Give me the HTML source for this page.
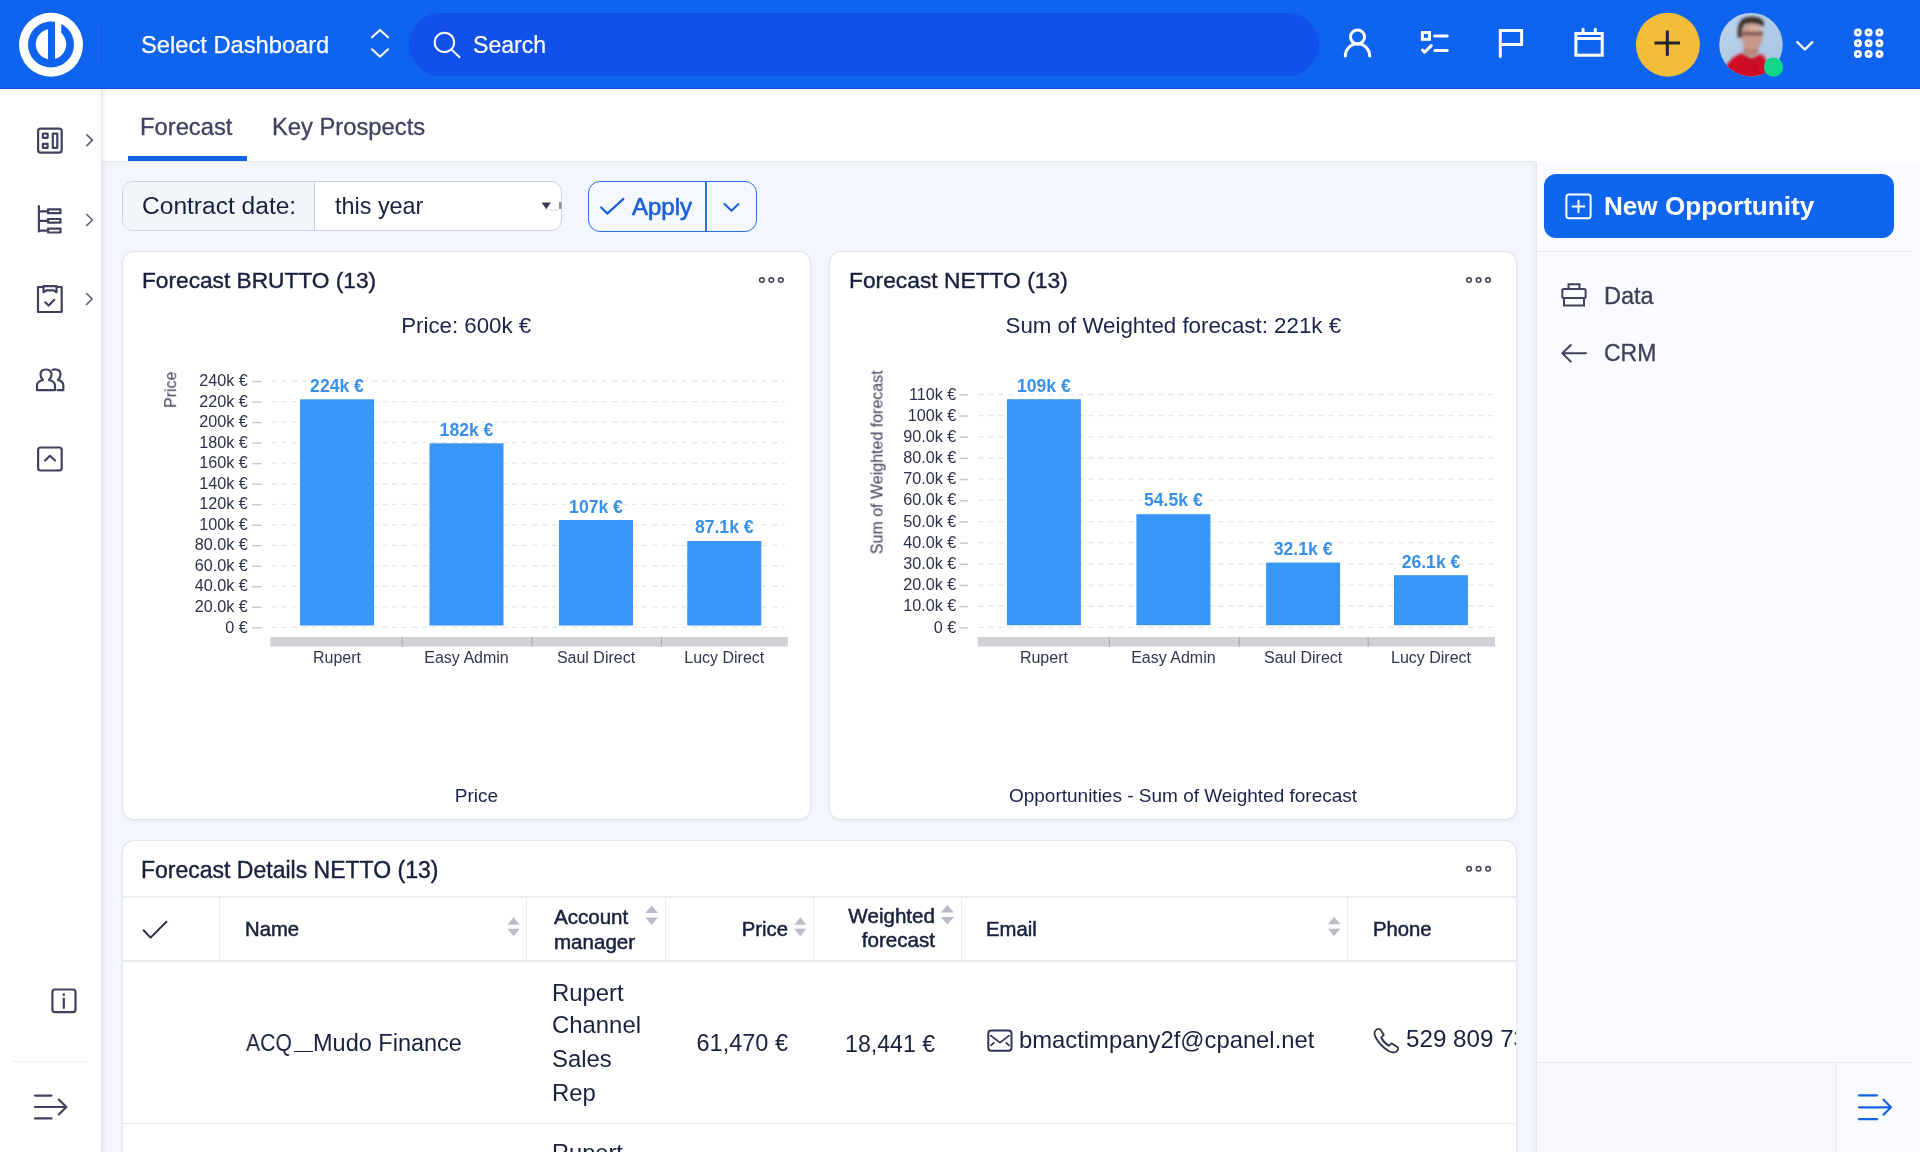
<!DOCTYPE html><html><head><meta charset="utf-8"><style>
html,body{margin:0;padding:0} body{width:1920px;height:1152px;overflow:hidden;position:relative;background:#f3f6fc;font-family:"Liberation Sans", sans-serif}
.t{position:absolute;line-height:1;white-space:nowrap;will-change:transform}
.m{-webkit-text-stroke:0.3px currentColor}
.sb{-webkit-text-stroke:0.55px currentColor}
svg text{will-change:transform}
svg{overflow:visible}
</style></head><body>
<div style="position:absolute;left:1536px;top:161px;width:384px;height:991px;background:#fafbfe;border-left:1px solid #e4e7ec;box-shadow:-2px 0 4px rgba(30,40,80,0.05)"></div>
<div style="position:absolute;left:102px;top:89px;width:1818px;height:72.5px;background:#fff"></div>
<div style="position:absolute;left:102px;top:161px;width:1434px;height:1px;background:#e7eaef;box-shadow:0 1px 4px rgba(40,60,100,0.07)"></div>
<div style="position:absolute;left:0px;top:89px;width:101px;height:1063px;background:#fff;border-right:1px solid #e2e5ea;box-shadow:2px 0 5px rgba(30,40,80,0.07)"></div>
<div style="position:absolute;left:0px;top:0px;width:1920px;height:89px;background:#0e64ef"></div>
<div style="position:absolute;left:0px;top:88px;width:1920px;height:1px;background:#0b55d6"></div>
<div style="position:absolute;left:101px;top:12px;width:1.2px;height:66px;background:linear-gradient(#0e64ef,#0b5ae4 20%,#0b5ae4 80%,#0e64ef)"></div>
<svg style="position:absolute;left:0px;top:0px;" width="102" height="89" viewBox="0 0 102 89"><circle cx="51" cy="44.8" r="32" fill="#fff"/>
<circle cx="51" cy="44.6" r="23" fill="#0e64ef"/>
<circle cx="51" cy="44.3" r="15.2" fill="#fff"/>
<rect x="48" y="21.8" width="7" height="38.7" fill="#0e64ef"/>
<rect x="55" y="20" width="6.3" height="14" fill="#fff"/></svg>
<div class="t" style="left:141.00px;top:33.86px;font-size:23.7px;color:#fff;font-weight:400;-webkit-text-stroke:0.25px #fff">Select Dashboard</div>
<svg style="position:absolute;left:360px;top:20px;" width="40" height="50" viewBox="360 20 40 50"><path d="M372 37.3 L380 29.9 L388 37.3 M372 49.3 L380 56.8 L388 49.3" fill="none" stroke="#fff" stroke-width="2" stroke-linecap="round" stroke-linejoin="round"/></svg>
<div style="position:absolute;left:408.5px;top:13px;width:910.5px;height:63px;background:#1150e9;border-radius:32px"></div>
<svg style="position:absolute;left:420px;top:20px;" width="60" height="50" viewBox="420 20 60 50"><circle cx="444.4" cy="42.4" r="9.7" fill="none" stroke="#fff" stroke-width="2"/><path d="M451.6 49.6 L459.6 57.2" stroke="#fff" stroke-width="2" stroke-linecap="round"/></svg>
<div class="t" style="left:473.00px;top:34.36px;font-size:23.1px;color:#fff;font-weight:400;-webkit-text-stroke:0.2px #fff">Search</div>
<svg style="position:absolute;left:1330px;top:20px;" width="60" height="50" viewBox="1330 20 60 50"><circle cx="1357.5" cy="36.9" r="7" fill="none" stroke="#fff" stroke-width="3"/><path d="M1345.3 56 A12.2 12.2 0 0 1 1369.7 56" fill="none" stroke="#fff" stroke-width="3" stroke-linecap="round"/></svg>
<svg style="position:absolute;left:1410px;top:20px;" width="50" height="50" viewBox="1410 20 50 50"><rect x="1422.4" y="32.5" width="7.1" height="6.8" fill="none" stroke="#fff" stroke-width="3"/><path d="M1434.7 36 H1447.3 M1434.7 50.4 H1447.3" stroke="#fff" stroke-width="3" stroke-linecap="round"/><path d="M1422.5 50 L1424.6 52.2 L1431.3 45.6" fill="none" stroke="#fff" stroke-width="3" stroke-linecap="round" stroke-linejoin="round"/></svg>
<svg style="position:absolute;left:1490px;top:20px;" width="50" height="50" viewBox="1490 20 50 50"><path d="M1500.3 56.5 V30.4 H1521.6 V44.5 H1500.3" fill="none" stroke="#fff" stroke-width="3" stroke-linecap="round" stroke-linejoin="miter"/></svg>
<svg style="position:absolute;left:1565px;top:20px;" width="50" height="50" viewBox="1565 20 50 50"><rect x="1575.9" y="33.5" width="26.3" height="21.7" fill="none" stroke="#fff" stroke-width="3"/><path d="M1576 38.5 H1602" stroke="#fff" stroke-width="3"/><path d="M1583.1 29.3 V33 M1595.3 29.3 V33" stroke="#fff" stroke-width="3" stroke-linecap="round"/></svg>
<svg style="position:absolute;left:1630px;top:8px;" width="80" height="80" viewBox="1630 8 80 80"><circle cx="1667.9" cy="44.7" r="32" fill="#f3bd3a"/><path d="M1654.5 43 H1680 M1667.3 30.5 V55.8" stroke="#1e2432" stroke-width="3"/></svg>
<svg style="position:absolute;left:1715px;top:8px;" width="80" height="80" viewBox="1715 8 80 80"><defs><clipPath id="avc"><circle cx="1751" cy="44.7" r="31.8"/></clipPath><filter id="avb" x="-30%" y="-30%" width="160%" height="160%"><feGaussianBlur stdDeviation="1.4"/></filter>
<linearGradient id="avg" x1="0" y1="0" x2="1" y2="1"><stop offset="0" stop-color="#bcd4ee"/><stop offset="1" stop-color="#a6c3e2"/></linearGradient></defs>
<circle cx="1751" cy="44.7" r="31.8" fill="url(#avg)"/>
<g clip-path="url(#avc)"><g filter="url(#avb)">
<ellipse cx="1751" cy="50" rx="8" ry="6" fill="#b5857a"/>
<ellipse cx="1752" cy="36.5" rx="10.8" ry="13.5" fill="#c8988b"/>
<ellipse cx="1755" cy="28" rx="6" ry="5" fill="#ddb2a4" opacity="0.8"/>
<path d="M1738 38 Q1736 22 1744 18 Q1752 15 1760 18 Q1765 21 1764 27 Q1756 22 1745 24 Q1741 28 1741.5 38 Z" fill="#3c302c"/>
<rect x="1741" y="31.8" width="22" height="3.6" rx="1" fill="#6a4c44" opacity="0.85"/>
<path d="M1722 84 L1726 66 Q1732 56 1742 53 L1751 58 L1761 54 Q1766 57 1767 64 L1769 84 Z" fill="#cf1028"/>
<path d="M1743 55 L1753 62 L1756 72" fill="none" stroke="#9a0a1a" stroke-width="1.5" opacity="0.7"/>
</g></g>
<circle cx="1773.5" cy="67.1" r="9.6" fill="#12d98a"/></svg>
<svg style="position:absolute;left:1790px;top:35px;" width="30" height="20" viewBox="1790 35 30 20"><path d="M1797.3 42.2 L1804.8 49.5 L1812.3 42.2" fill="none" stroke="#fff" stroke-width="2.4" stroke-linecap="round" stroke-linejoin="round"/></svg>
<svg style="position:absolute;left:1845px;top:20px;" width="50" height="50" viewBox="1845 20 50 50"><circle cx="1857.9" cy="32.4" r="2.55" fill="none" stroke="#fff" stroke-width="2.9"/><circle cx="1857.9" cy="43.2" r="2.55" fill="none" stroke="#fff" stroke-width="2.9"/><circle cx="1857.9" cy="53.9" r="2.55" fill="none" stroke="#fff" stroke-width="2.9"/><circle cx="1868.6" cy="32.4" r="2.55" fill="none" stroke="#fff" stroke-width="2.9"/><circle cx="1868.6" cy="43.2" r="2.55" fill="none" stroke="#fff" stroke-width="2.9"/><circle cx="1868.6" cy="53.9" r="2.55" fill="none" stroke="#fff" stroke-width="2.9"/><circle cx="1879.4" cy="32.4" r="2.55" fill="none" stroke="#fff" stroke-width="2.9"/><circle cx="1879.4" cy="43.2" r="2.55" fill="none" stroke="#fff" stroke-width="2.9"/><circle cx="1879.4" cy="53.9" r="2.55" fill="none" stroke="#fff" stroke-width="2.9"/></svg>
<svg style="position:absolute;left:30px;top:120px;" width="70" height="300" viewBox="30 120 70 300">
<rect x="38.1" y="128.7" width="23.6" height="23.9" rx="2.5" fill="none" stroke="#3f425e" stroke-width="2.2" stroke-linecap="round" stroke-linejoin="round"/>
<rect x="42.9" y="133.7" width="4.7" height="4.1" fill="none" stroke="#3f425e" stroke-width="2.2" stroke-linecap="round" stroke-linejoin="round"/>
<rect x="42.9" y="143.9" width="4.7" height="3.9" fill="none" stroke="#3f425e" stroke-width="2.2" stroke-linecap="round" stroke-linejoin="round"/>
<rect x="52.8" y="133.7" width="4.5" height="14.1" fill="none" stroke="#3f425e" stroke-width="2.2" stroke-linecap="round" stroke-linejoin="round"/>
<path d="M86.8 134.8 L92.5 140.2 L86.8 145.6" fill="none" stroke="#5a5d70" stroke-width="1.6" stroke-linecap="round" stroke-linejoin="round"/>
<path d="M38.9 206 V231.6 M38.9 211.3 H47 M38.9 220.8 H47 M38.9 230.6 H47" fill="none" stroke="#3f425e" stroke-width="2.2" stroke-linecap="round" stroke-linejoin="round"/>
<rect x="48" y="209.4" width="12.5" height="3.8" fill="none" stroke="#3f425e" stroke-width="2.2" stroke-linecap="round" stroke-linejoin="round"/>
<rect x="48" y="219" width="12.5" height="3.6" fill="none" stroke="#3f425e" stroke-width="2.2" stroke-linecap="round" stroke-linejoin="round"/>
<rect x="48" y="228.7" width="12.5" height="3.8" fill="none" stroke="#3f425e" stroke-width="2.2" stroke-linecap="round" stroke-linejoin="round"/>
<path d="M86.8 214.5 L92.5 220 L86.8 225.4" fill="none" stroke="#5a5d70" stroke-width="1.6" stroke-linecap="round" stroke-linejoin="round"/>
<path d="M43.5 287 H38 V312 H61.7 V287 H56.5" fill="none" stroke="#3f425e" stroke-width="2.2" stroke-linecap="round" stroke-linejoin="round"/>
<path d="M43.5 286.1 V292.2 L46.5 290.4 H53.5 L56.5 292.2 V286.1 Z" fill="none" stroke="#3f425e" stroke-width="2.2" stroke-linecap="round" stroke-linejoin="round"/>
<path d="M45.2 302.3 L48.7 305.5 L54.3 299.8" fill="none" stroke="#3f425e" stroke-width="2.2" stroke-linecap="round" stroke-linejoin="round"/>
<path d="M86.6 293.5 L92.2 299 L86.6 304.5" fill="none" stroke="#5a5d70" stroke-width="1.6" stroke-linecap="round" stroke-linejoin="round"/>
</svg>
<svg style="position:absolute;left:30px;top:360px;" width="70" height="120" viewBox="30 360 70 120">
<path d="M37 390.2 V385.5 Q37 381.5 43 380 Q40.5 377.5 40.5 374.5 Q40.5 369.5 46 369.5 Q51.5 369.5 51.5 374.5 Q51.5 377.5 49 380 Q55 381.5 55 385.5 V390.2 Z" fill="none" stroke="#3f425e" stroke-width="2.2" stroke-linecap="round" stroke-linejoin="round"/>
<path d="M52.5 369.8 Q53.8 369.4 55 369.4 Q60.5 369.4 60.5 374.4 Q60.5 377.4 58 379.9 Q63.3 381.4 63.3 385.4 V390.2 H57.5" fill="none" stroke="#3f425e" stroke-width="2.2" stroke-linecap="round" stroke-linejoin="round"/>
<rect x="38.1" y="447.5" width="23.6" height="23" rx="2.5" fill="none" stroke="#3f425e" stroke-width="2.2" stroke-linecap="round" stroke-linejoin="round"/>
<path d="M45 460.5 L50 455.8 L55 460.5" fill="none" stroke="#3f425e" stroke-width="2.2" stroke-linecap="round" stroke-linejoin="round"/>
</svg>
<svg style="position:absolute;left:40px;top:980px;" width="40" height="40" viewBox="40 980 40 40"><rect x="52.4" y="989.5" width="23.1" height="22.6" rx="2.5" fill="none" stroke="#3f425e" stroke-width="2.2" stroke-linecap="round" stroke-linejoin="round"/><circle cx="63.8" cy="994.6" r="1.3" fill="#3f425e"/><path d="M63.8 998.5 V1008" fill="none" stroke="#3f425e" stroke-width="2.2" stroke-linecap="round" stroke-linejoin="round"/></svg>
<div style="position:absolute;left:12px;top:1061px;width:76px;height:1px;background:#eceef2"></div>
<svg style="position:absolute;left:20px;top:1080px;" width="60" height="50" viewBox="20 1080 60 50"><path d="M35 1095.6 H51.5 M35 1118.4 H51.5 M35 1107 H66.2 M58.8 1099.5 L66.4 1107 L58.8 1114.5" fill="none" stroke="#3f425e" stroke-width="2.2" stroke-linecap="round" stroke-linejoin="round"/></svg>
<div class="t" style="left:140.30px;top:115.21px;font-size:23.75px;color:#3f4260;font-weight:400;-webkit-text-stroke:0.3px #3f4260">Forecast</div>
<div class="t" style="left:271.80px;top:115.21px;font-size:23.75px;color:#3f4260;font-weight:400;-webkit-text-stroke:0.3px #3f4260">Key Prospects</div>
<div style="position:absolute;left:128px;top:156px;width:119px;height:5px;background:#1463e6"></div>
<div style="position:absolute;left:122px;top:180.5px;width:439.5px;height:50.5px;box-sizing:border-box;border:1px solid #c9d3e4;border-radius:11px;background:#fff;overflow:hidden"></div>
<div style="position:absolute;left:123px;top:181.5px;width:191px;height:48.5px;background:#f2f6fb;border-radius:10px 0 0 10px;border-right:1px solid #c9d3e4"></div>
<div class="t" style="left:141.80px;top:193.53px;font-size:24.55px;color:#18213d;font-weight:400;">Contract date:</div>
<div class="t" style="left:335.00px;top:194.51px;font-size:23.4px;color:#18213d;font-weight:400;">this year</div>
<svg style="position:absolute;left:535px;top:195px;" width="30" height="20" viewBox="535 195 30 20"><path d="M541.6 202.4 H551 L546.3 209.2 Z" fill="#3a3a55"/><rect x="559" y="202" width="2.5" height="7" fill="#8a8d99"/><rect x="549" y="209.5" width="10" height="1" fill="#d8dae0"/></svg>
<div style="position:absolute;left:587.5px;top:180.5px;width:169px;height:51px;box-sizing:border-box;border:1.6px solid #2f6fe2;border-radius:12px;background:#f5f8fe"></div>
<div style="position:absolute;left:704.8px;top:181px;width:1.8px;height:50px;background:#2f6fe2"></div>
<svg style="position:absolute;left:595px;top:190px;" width="35" height="30" viewBox="595 190 35 30"><path d="M601.2 207.5 L607.2 213.6 L623.4 198.9" fill="none" stroke="#1a5fd8" stroke-width="2.2" stroke-linecap="round" stroke-linejoin="round"/></svg>
<div class="t" style="left:631.50px;top:194.60px;font-size:24px;color:#1a5fd8;font-weight:400;-webkit-text-stroke:0.6px #1a5fd8">Apply</div>
<svg style="position:absolute;left:715px;top:195px;" width="30" height="25" viewBox="715 195 30 25"><path d="M724.5 204 L731.5 210.8 L738.5 204" fill="none" stroke="#1a5fd8" stroke-width="2" stroke-linecap="round" stroke-linejoin="round"/></svg>
<div style="position:absolute;left:122px;top:251px;width:689px;height:569px;box-sizing:border-box;background:#fff;border:1px solid #dfe3ea;border-radius:12px;box-shadow:0 1px 3px rgba(30,50,90,0.07)"></div>
<div style="position:absolute;left:829px;top:251px;width:688px;height:569px;box-sizing:border-box;background:#fff;border:1px solid #dfe3ea;border-radius:12px;box-shadow:0 1px 3px rgba(30,50,90,0.07)"></div>
<div style="position:absolute;left:122px;top:840px;width:1395px;height:400px;box-sizing:border-box;background:#fff;border:1px solid #dfe3ea;border-radius:12px;box-shadow:0 1px 3px rgba(30,50,90,0.07)"></div>
<div class="t" style="left:141.80px;top:268.90px;font-size:22.7px;color:#18213d;font-weight:400;-webkit-text-stroke:0.4px #18213d">Forecast BRUTTO (13)</div>
<div class="t" style="left:849.20px;top:269.32px;font-size:22.8px;color:#18213d;font-weight:400;-webkit-text-stroke:0.4px #18213d">Forecast NETTO (13)</div>
<div class="t" style="left:141.30px;top:858.75px;font-size:23.0px;color:#18213d;font-weight:400;-webkit-text-stroke:0.4px #18213d">Forecast Details NETTO (13)</div>
<svg style="position:absolute;left:750px;top:270px;" width="50" height="20" viewBox="750 270 50 20"><circle cx="761.85" cy="280" r="2.3" fill="none" stroke="#3d3f50" stroke-width="1.5"/><circle cx="771.35" cy="280" r="2.3" fill="none" stroke="#3d3f50" stroke-width="1.5"/><circle cx="780.85" cy="280" r="2.3" fill="none" stroke="#3d3f50" stroke-width="1.5"/></svg>
<svg style="position:absolute;left:1455px;top:270px;" width="50" height="20" viewBox="1455 270 50 20"><circle cx="1469.06" cy="280" r="2.3" fill="none" stroke="#3d3f50" stroke-width="1.5"/><circle cx="1478.56" cy="280" r="2.3" fill="none" stroke="#3d3f50" stroke-width="1.5"/><circle cx="1488.06" cy="280" r="2.3" fill="none" stroke="#3d3f50" stroke-width="1.5"/></svg>
<svg style="position:absolute;left:1455px;top:859px;" width="50" height="20" viewBox="1455 859 50 20"><circle cx="1469.06" cy="868.7" r="2.3" fill="none" stroke="#3d3f50" stroke-width="1.5"/><circle cx="1478.56" cy="868.7" r="2.3" fill="none" stroke="#3d3f50" stroke-width="1.5"/><circle cx="1488.06" cy="868.7" r="2.3" fill="none" stroke="#3d3f50" stroke-width="1.5"/></svg>
<svg style="position:absolute;left:122px;top:251px;" width="689" height="569" viewBox="122 251 689 569"><g font-family='"Liberation Sans", sans-serif'><text x="247.8" y="386.25" text-anchor="end" font-size="16.2" fill="#2b324b">240k €</text><rect x="252.2" y="380.85" width="9.400000000000034" height="1.4" fill="#c6c7cc"/><line x1="272" y1="381.15" x2="785" y2="381.15" stroke="#e8e8eb" stroke-width="1.3" stroke-dasharray="5,5"/><text x="247.8" y="406.77" text-anchor="end" font-size="16.2" fill="#2b324b">220k €</text><rect x="252.2" y="401.37" width="9.400000000000034" height="1.4" fill="#c6c7cc"/><line x1="272" y1="401.67" x2="785" y2="401.67" stroke="#e8e8eb" stroke-width="1.3" stroke-dasharray="5,5"/><text x="247.8" y="427.29" text-anchor="end" font-size="16.2" fill="#2b324b">200k €</text><rect x="252.2" y="421.89" width="9.400000000000034" height="1.4" fill="#c6c7cc"/><line x1="272" y1="422.19" x2="785" y2="422.19" stroke="#e8e8eb" stroke-width="1.3" stroke-dasharray="5,5"/><text x="247.8" y="447.81" text-anchor="end" font-size="16.2" fill="#2b324b">180k €</text><rect x="252.2" y="442.41" width="9.400000000000034" height="1.4" fill="#c6c7cc"/><line x1="272" y1="442.71" x2="785" y2="442.71" stroke="#e8e8eb" stroke-width="1.3" stroke-dasharray="5,5"/><text x="247.8" y="468.33" text-anchor="end" font-size="16.2" fill="#2b324b">160k €</text><rect x="252.2" y="462.93" width="9.400000000000034" height="1.4" fill="#c6c7cc"/><line x1="272" y1="463.23" x2="785" y2="463.23" stroke="#e8e8eb" stroke-width="1.3" stroke-dasharray="5,5"/><text x="247.8" y="488.85" text-anchor="end" font-size="16.2" fill="#2b324b">140k €</text><rect x="252.2" y="483.45" width="9.400000000000034" height="1.4" fill="#c6c7cc"/><line x1="272" y1="483.75" x2="785" y2="483.75" stroke="#e8e8eb" stroke-width="1.3" stroke-dasharray="5,5"/><text x="247.8" y="509.38" text-anchor="end" font-size="16.2" fill="#2b324b">120k €</text><rect x="252.2" y="503.98" width="9.400000000000034" height="1.4" fill="#c6c7cc"/><line x1="272" y1="504.28" x2="785" y2="504.28" stroke="#e8e8eb" stroke-width="1.3" stroke-dasharray="5,5"/><text x="247.8" y="529.90" text-anchor="end" font-size="16.2" fill="#2b324b">100k €</text><rect x="252.2" y="524.50" width="9.400000000000034" height="1.4" fill="#c6c7cc"/><line x1="272" y1="524.80" x2="785" y2="524.80" stroke="#e8e8eb" stroke-width="1.3" stroke-dasharray="5,5"/><text x="247.8" y="550.42" text-anchor="end" font-size="16.2" fill="#2b324b">80.0k €</text><rect x="252.2" y="545.02" width="9.400000000000034" height="1.4" fill="#c6c7cc"/><line x1="272" y1="545.32" x2="785" y2="545.32" stroke="#e8e8eb" stroke-width="1.3" stroke-dasharray="5,5"/><text x="247.8" y="570.94" text-anchor="end" font-size="16.2" fill="#2b324b">60.0k €</text><rect x="252.2" y="565.54" width="9.400000000000034" height="1.4" fill="#c6c7cc"/><line x1="272" y1="565.84" x2="785" y2="565.84" stroke="#e8e8eb" stroke-width="1.3" stroke-dasharray="5,5"/><text x="247.8" y="591.46" text-anchor="end" font-size="16.2" fill="#2b324b">40.0k €</text><rect x="252.2" y="586.06" width="9.400000000000034" height="1.4" fill="#c6c7cc"/><line x1="272" y1="586.36" x2="785" y2="586.36" stroke="#e8e8eb" stroke-width="1.3" stroke-dasharray="5,5"/><text x="247.8" y="611.98" text-anchor="end" font-size="16.2" fill="#2b324b">20.0k €</text><rect x="252.2" y="606.58" width="9.400000000000034" height="1.4" fill="#c6c7cc"/><line x1="272" y1="606.88" x2="785" y2="606.88" stroke="#e8e8eb" stroke-width="1.3" stroke-dasharray="5,5"/><text x="247.8" y="632.50" text-anchor="end" font-size="16.2" fill="#2b324b">0 €</text><rect x="252.2" y="627.10" width="9.400000000000034" height="1.4" fill="#c6c7cc"/><line x1="272" y1="627.40" x2="785" y2="627.40" stroke="#e8e8eb" stroke-width="1.3" stroke-dasharray="5,5"/><rect x="300.00" y="399.3" width="74" height="226.20" fill="#3796f6"/><text x="337" y="391.9" text-anchor="middle" font-size="17.6" font-weight="700" fill="#3a8fe8">224k €</text><rect x="429.50" y="443.3" width="74" height="182.20" fill="#3796f6"/><text x="466.5" y="435.6" text-anchor="middle" font-size="17.6" font-weight="700" fill="#3a8fe8">182k €</text><rect x="559.00" y="520" width="74" height="105.50" fill="#3796f6"/><text x="596" y="512.7" text-anchor="middle" font-size="17.6" font-weight="700" fill="#3a8fe8">107k €</text><rect x="687.25" y="541" width="74" height="84.50" fill="#3796f6"/><text x="724.25" y="533.3" text-anchor="middle" font-size="17.6" font-weight="700" fill="#3a8fe8">87.1k €</text><rect x="270.3" y="637" width="517.50" height="9.6" fill="#d1d2d6"/><rect x="401.65" y="637" width="1.2" height="9.6" fill="#a9abb2"/><rect x="531.4" y="637" width="1.2" height="9.6" fill="#a9abb2"/><rect x="660.9" y="637" width="1.2" height="9.6" fill="#a9abb2"/><text x="337" y="663" text-anchor="middle" font-size="16" fill="#2f364f">Rupert</text><text x="466.5" y="663" text-anchor="middle" font-size="16" fill="#2f364f">Easy Admin</text><text x="596" y="663" text-anchor="middle" font-size="16" fill="#2f364f">Saul Direct</text><text x="724.25" y="663" text-anchor="middle" font-size="16" fill="#2f364f">Lucy Direct</text><text transform="translate(176.2,389.7) rotate(-90)" x="0" y="0" text-anchor="middle" font-size="16" fill="#3a4057">Price</text><text x="466.2" y="332.5" text-anchor="middle" font-size="22.3" fill="#1a2349">Price: 600k €</text><text x="476.5" y="801.7" text-anchor="middle" font-size="19" fill="#1a2349">Price</text></g></svg>
<svg style="position:absolute;left:829px;top:251px;" width="687" height="569" viewBox="829 251 687 569"><g font-family='"Liberation Sans", sans-serif'><text x="956.3" y="399.60" text-anchor="end" font-size="16.2" fill="#2b324b">110k €</text><rect x="959.4" y="394.20" width="8.600000000000023" height="1.4" fill="#c6c7cc"/><line x1="978.5" y1="394.50" x2="1493" y2="394.50" stroke="#e8e8eb" stroke-width="1.3" stroke-dasharray="5,5"/><text x="956.3" y="420.77" text-anchor="end" font-size="16.2" fill="#2b324b">100k €</text><rect x="959.4" y="415.37" width="8.600000000000023" height="1.4" fill="#c6c7cc"/><line x1="978.5" y1="415.67" x2="1493" y2="415.67" stroke="#e8e8eb" stroke-width="1.3" stroke-dasharray="5,5"/><text x="956.3" y="441.95" text-anchor="end" font-size="16.2" fill="#2b324b">90.0k €</text><rect x="959.4" y="436.55" width="8.600000000000023" height="1.4" fill="#c6c7cc"/><line x1="978.5" y1="436.85" x2="1493" y2="436.85" stroke="#e8e8eb" stroke-width="1.3" stroke-dasharray="5,5"/><text x="956.3" y="463.12" text-anchor="end" font-size="16.2" fill="#2b324b">80.0k €</text><rect x="959.4" y="457.72" width="8.600000000000023" height="1.4" fill="#c6c7cc"/><line x1="978.5" y1="458.02" x2="1493" y2="458.02" stroke="#e8e8eb" stroke-width="1.3" stroke-dasharray="5,5"/><text x="956.3" y="484.29" text-anchor="end" font-size="16.2" fill="#2b324b">70.0k €</text><rect x="959.4" y="478.89" width="8.600000000000023" height="1.4" fill="#c6c7cc"/><line x1="978.5" y1="479.19" x2="1493" y2="479.19" stroke="#e8e8eb" stroke-width="1.3" stroke-dasharray="5,5"/><text x="956.3" y="505.46" text-anchor="end" font-size="16.2" fill="#2b324b">60.0k €</text><rect x="959.4" y="500.06" width="8.600000000000023" height="1.4" fill="#c6c7cc"/><line x1="978.5" y1="500.36" x2="1493" y2="500.36" stroke="#e8e8eb" stroke-width="1.3" stroke-dasharray="5,5"/><text x="956.3" y="526.64" text-anchor="end" font-size="16.2" fill="#2b324b">50.0k €</text><rect x="959.4" y="521.24" width="8.600000000000023" height="1.4" fill="#c6c7cc"/><line x1="978.5" y1="521.54" x2="1493" y2="521.54" stroke="#e8e8eb" stroke-width="1.3" stroke-dasharray="5,5"/><text x="956.3" y="547.81" text-anchor="end" font-size="16.2" fill="#2b324b">40.0k €</text><rect x="959.4" y="542.41" width="8.600000000000023" height="1.4" fill="#c6c7cc"/><line x1="978.5" y1="542.71" x2="1493" y2="542.71" stroke="#e8e8eb" stroke-width="1.3" stroke-dasharray="5,5"/><text x="956.3" y="568.98" text-anchor="end" font-size="16.2" fill="#2b324b">30.0k €</text><rect x="959.4" y="563.58" width="8.600000000000023" height="1.4" fill="#c6c7cc"/><line x1="978.5" y1="563.88" x2="1493" y2="563.88" stroke="#e8e8eb" stroke-width="1.3" stroke-dasharray="5,5"/><text x="956.3" y="590.15" text-anchor="end" font-size="16.2" fill="#2b324b">20.0k €</text><rect x="959.4" y="584.75" width="8.600000000000023" height="1.4" fill="#c6c7cc"/><line x1="978.5" y1="585.05" x2="1493" y2="585.05" stroke="#e8e8eb" stroke-width="1.3" stroke-dasharray="5,5"/><text x="956.3" y="611.33" text-anchor="end" font-size="16.2" fill="#2b324b">10.0k €</text><rect x="959.4" y="605.93" width="8.600000000000023" height="1.4" fill="#c6c7cc"/><line x1="978.5" y1="606.23" x2="1493" y2="606.23" stroke="#e8e8eb" stroke-width="1.3" stroke-dasharray="5,5"/><text x="956.3" y="632.50" text-anchor="end" font-size="16.2" fill="#2b324b">0 €</text><rect x="959.4" y="627.10" width="8.600000000000023" height="1.4" fill="#c6c7cc"/><line x1="978.5" y1="627.40" x2="1493" y2="627.40" stroke="#e8e8eb" stroke-width="1.3" stroke-dasharray="5,5"/><rect x="1006.90" y="399.2" width="74" height="226.00" fill="#3796f6"/><text x="1043.9" y="391.6" text-anchor="middle" font-size="17.6" font-weight="700" fill="#3a8fe8">109k €</text><rect x="1136.40" y="514.2" width="74" height="111.00" fill="#3796f6"/><text x="1173.4" y="506" text-anchor="middle" font-size="17.6" font-weight="700" fill="#3a8fe8">54.5k €</text><rect x="1266.10" y="562.6" width="74" height="62.60" fill="#3796f6"/><text x="1303.1" y="555" text-anchor="middle" font-size="17.6" font-weight="700" fill="#3a8fe8">32.1k €</text><rect x="1394.00" y="575.2" width="74" height="50.00" fill="#3796f6"/><text x="1431" y="567.6" text-anchor="middle" font-size="17.6" font-weight="700" fill="#3a8fe8">26.1k €</text><rect x="977.7" y="637" width="517.30" height="9.6" fill="#d1d2d6"/><rect x="1108.8000000000002" y="637" width="1.2" height="9.6" fill="#a9abb2"/><rect x="1238.6000000000001" y="637" width="1.2" height="9.6" fill="#a9abb2"/><rect x="1367.6000000000001" y="637" width="1.2" height="9.6" fill="#a9abb2"/><text x="1043.9" y="663" text-anchor="middle" font-size="16" fill="#2f364f">Rupert</text><text x="1173.4" y="663" text-anchor="middle" font-size="16" fill="#2f364f">Easy Admin</text><text x="1303.1" y="663" text-anchor="middle" font-size="16" fill="#2f364f">Saul Direct</text><text x="1431" y="663" text-anchor="middle" font-size="16" fill="#2f364f">Lucy Direct</text><text transform="translate(882.5,462.3) rotate(-90)" x="0" y="0" text-anchor="middle" font-size="16" fill="#3a4057">Sum of Weighted forecast</text><text x="1173.3" y="332.8" text-anchor="middle" font-size="22.3" fill="#1a2349">Sum of Weighted forecast: 221k €</text><text x="1183" y="801.5" text-anchor="middle" font-size="19" fill="#1a2349">Opportunities - Sum of Weighted forecast</text></g></svg>
<div style="position:absolute;left:122px;top:840px;width:1395px;height:312px;overflow:hidden;border-radius:12px 12px 0 0">
<div style="position:absolute;left:-122px;top:-840px;width:1920px;height:1152px">
<div style="position:absolute;left:123px;top:896px;width:1394px;height:2px;background:#e9ecf0"></div>
<div style="position:absolute;left:123px;top:960px;width:1394px;height:2px;background:#e7eaee"></div>
<div style="position:absolute;left:218.9px;top:898px;width:1px;height:62px;background:#e9ecf0"></div>
<div style="position:absolute;left:526.2px;top:898px;width:1px;height:62px;background:#e9ecf0"></div>
<div style="position:absolute;left:665.0px;top:898px;width:1px;height:62px;background:#e9ecf0"></div>
<div style="position:absolute;left:813.3px;top:898px;width:1px;height:62px;background:#e9ecf0"></div>
<div style="position:absolute;left:960.6px;top:898px;width:1px;height:62px;background:#e9ecf0"></div>
<div style="position:absolute;left:1346.7px;top:898px;width:1px;height:62px;background:#e9ecf0"></div>
<svg style="position:absolute;left:138px;top:915px;" width="35" height="30" viewBox="138 915 35 30"><path d="M143.6 930.2 L150.6 937.6 L166.4 921.7" fill="none" stroke="#2a3045" stroke-width="2" stroke-linecap="round" stroke-linejoin="round"/></svg>
<div class="t" style="left:245.40px;top:918.75px;font-size:20.3px;color:#18213d;font-weight:400;-webkit-text-stroke:0.5px #18213d">Name</div>
<div class="t" style="left:553.90px;top:907.33px;font-size:20.55px;color:#18213d;font-weight:400;-webkit-text-stroke:0.5px #18213d">Account</div>
<div class="t" style="left:553.90px;top:931.53px;font-size:20.55px;color:#18213d;font-weight:400;-webkit-text-stroke:0.5px #18213d">manager</div>
<div class="t" style="left:188.00px;width:600px;text-align:right;top:918.75px;font-size:20.3px;color:#18213d;font-weight:400;-webkit-text-stroke:0.5px #18213d">Price</div>
<div class="t" style="left:335.00px;width:600px;text-align:right;top:906.29px;font-size:20.6px;color:#18213d;font-weight:400;-webkit-text-stroke:0.5px #18213d">Weighted</div>
<div class="t" style="left:335.00px;width:600px;text-align:right;top:930.19px;font-size:20.6px;color:#18213d;font-weight:400;-webkit-text-stroke:0.5px #18213d">forecast</div>
<div class="t" style="left:986.20px;top:918.75px;font-size:20.3px;color:#18213d;font-weight:400;-webkit-text-stroke:0.5px #18213d">Email</div>
<div class="t" style="left:1372.70px;top:918.75px;font-size:20.3px;color:#18213d;font-weight:400;-webkit-text-stroke:0.5px #18213d">Phone</div>
<svg style="position:absolute;left:500px;top:900px;" width="480" height="45" viewBox="500 900 480 45"><path d="M507.5 924.7 L513.6 917.2 L519.7 924.7 Z M507.5 928.8 L513.6 936.3 L519.7 928.8 Z" fill="#b9bdc6"/><path d="M645.3 913.0 L651.65 905.5 L658 913.0 Z M645.3 917.5 L651.65 925.0 L658 917.5 Z" fill="#b9bdc6"/><path d="M794.2 924.7 L800.25 917.2 L806.3 924.7 Z M794.2 928.8 L800.25 936.3 L806.3 928.8 Z" fill="#b9bdc6"/><path d="M940.7 912.6 L947.4000000000001 905.1 L954.1 912.6 Z M940.7 917 L947.4000000000001 924.5 L954.1 917 Z" fill="#b9bdc6"/></svg>
<svg style="position:absolute;left:1320px;top:910px;" width="30" height="35" viewBox="1320 910 30 35"><path d="M1327.9 924.2 L1334.1 916.7 L1340.3 924.2 Z M1327.9 928.8 L1334.1 936.3 L1340.3 928.8 Z" fill="#b9bdc6"/></svg>
<div class="t" style="left:245.50px;top:1032.23px;font-size:23.5px;color:#18213d;font-weight:400;transform:scaleX(0.9);transform-origin:0 0">ACQ</div>
<div style="position:absolute;left:293.8px;top:1050.5px;width:19.3px;height:1.8px;background:#18213d"></div>
<div class="t" style="left:312.90px;top:1032.23px;font-size:23.5px;color:#18213d;font-weight:400;">Mudo Finance</div>
<div class="t" style="left:552.20px;top:980.79px;font-size:23.9px;color:#18213d;font-weight:400;">Rupert</div>
<div class="t" style="left:552.20px;top:1013.38px;font-size:23.9px;color:#18213d;font-weight:400;">Channel</div>
<div class="t" style="left:552.20px;top:1047.38px;font-size:23.9px;color:#18213d;font-weight:400;">Sales</div>
<div class="t" style="left:552.20px;top:1080.68px;font-size:23.9px;color:#18213d;font-weight:400;">Rep</div>
<div class="t" style="left:187.80px;width:600px;text-align:right;top:1032.23px;font-size:23.5px;color:#18213d;font-weight:400;">61,470 €</div>
<div class="t" style="left:334.50px;width:600px;text-align:right;top:1032.96px;font-size:23.1px;color:#18213d;font-weight:400;">18,441 €</div>
<svg style="position:absolute;left:980px;top:1020px;" width="40" height="40" viewBox="980 1020 40 40"><rect x="988.3" y="1030.5" width="23.2" height="20.2" rx="3" fill="none" stroke="#2f3550" stroke-width="2"/><path d="M990.8 1035.6 L1000 1042.6 L1009 1035.6 M991 1045.4 L993.8 1042.8 M1006.2 1042.8 L1009 1045.4" fill="none" stroke="#2f3550" stroke-width="1.8" stroke-linecap="round" stroke-linejoin="round"/></svg>
<div class="t" style="left:1018.60px;top:1027.77px;font-size:23.8px;color:#18213d;font-weight:400;">bmactimpany2f@cpanel.net</div>
<svg style="position:absolute;left:1370px;top:1024px;" width="35" height="35" viewBox="1370 1024 35 35"><path d="M1380.2 1029.2 Q1377.5 1028 1375.5 1030.5 Q1373.5 1033 1375.5 1037 Q1380 1046 1389.5 1051.5 Q1393.5 1053.5 1396.5 1051.5 Q1398.8 1049.5 1398 1047.5 L1391.5 1043.3 L1388.8 1045.8 Q1383.5 1042.5 1381.2 1037.5 L1383.8 1034.8 Z" fill="none" stroke="#2f3550" stroke-width="1.8" stroke-linejoin="round"/></svg>
<div class="t" style="left:1406.20px;top:1027.23px;font-size:24.2px;color:#18213d;font-weight:400;">529 809 733</div>
<div style="position:absolute;left:123px;top:1122.5px;width:1393px;height:1px;background:#e9ecf0"></div>
<div class="t" style="left:552.20px;top:1141.74px;font-size:23.6px;color:#18213d;font-weight:400;">Rupert</div>
</div></div>
<div style="position:absolute;left:122px;top:840px;width:1395px;height:312px;box-sizing:border-box;border:1px solid #e2e6ed;border-bottom:none;border-radius:12px 12px 0 0;pointer-events:none"></div>
<div style="position:absolute;left:1544px;top:174px;width:350px;height:64px;background:#0f66ee;border-radius:12px"></div>
<svg style="position:absolute;left:1560px;top:188px;" width="40" height="40" viewBox="1560 188 40 40"><rect x="1566.4" y="194.6" width="24.2" height="23.6" rx="2.5" fill="none" stroke="#fff" stroke-width="2"/><path d="M1571.8 206.4 H1585.2 M1578.5 199.8 V213" stroke="#fff" stroke-width="2"/></svg>
<div class="t" style="left:1604.00px;top:193.01px;font-size:26.1px;color:#fff;font-weight:700;">New Opportunity</div>
<div style="position:absolute;left:1537px;top:250.5px;width:376px;height:1px;background:#e8ebf0"></div>
<svg style="position:absolute;left:1555px;top:278px;" width="40" height="35" viewBox="1555 278 40 35"><path d="M1568.5 289 V284.2 H1579.5 V289" fill="none" stroke="#3f425e" stroke-width="2"/><rect x="1562.3" y="289" width="23.3" height="9" rx="1.5" fill="none" stroke="#3f425e" stroke-width="2"/><path d="M1564 298 V305.6 H1584 V298" fill="none" stroke="#3f425e" stroke-width="2"/></svg>
<div class="t" style="left:1604.00px;top:285.02px;font-size:23.5px;color:#3c3f58;font-weight:400;-webkit-text-stroke:0.3px #3c3f58">Data</div>
<svg style="position:absolute;left:1555px;top:340px;" width="40" height="30" viewBox="1555 340 40 30"><path d="M1586 353.3 H1562.5 M1570.8 345 L1562.3 353.3 L1570.8 361.6" fill="none" stroke="#3f425e" stroke-width="2" stroke-linecap="round" stroke-linejoin="round"/></svg>
<div class="t" style="left:1604.00px;top:342.45px;font-size:23px;color:#3c3f58;font-weight:400;-webkit-text-stroke:0.3px #3c3f58">CRM</div>
<div style="position:absolute;left:1537px;top:1061.5px;width:377px;height:1px;background:#e8ebf0"></div>
<div style="position:absolute;left:1836px;top:1064px;width:1px;height:88px;background:#e8ebf0"></div>
<div style="position:absolute;left:1537px;top:1062.5px;width:299px;height:90px;background:#f6f8fc"></div>
<svg style="position:absolute;left:1850px;top:1085px;" width="50" height="45" viewBox="1850 1085 50 45"><path d="M1859 1095.4 H1877 M1859 1119.2 H1877 M1859 1107.3 H1891 M1883.5 1099.8 L1891 1107.3 L1883.5 1114.8" fill="none" stroke="#1565e6" stroke-width="2.2" stroke-linecap="round" stroke-linejoin="round"/></svg>
</body></html>
